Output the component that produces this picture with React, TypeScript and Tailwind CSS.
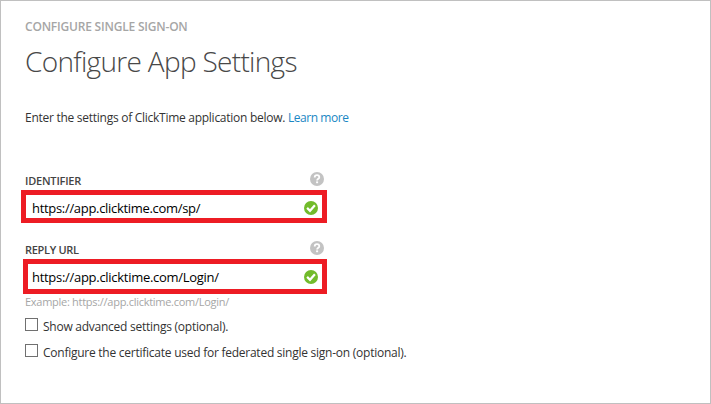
import React from "react";

function HelpIcon() {
  return (
    <svg className="block h-[14px] w-[14px]" viewBox="0 0 14 14">
      <circle cx="7" cy="7" r="7" fill="#c3c3c3" />
      <path d="M4.7 5.4C4.7 4 5.7 3.2 7 3.2s2.3.7 2.3 2c0 1.6-2.2 1.6-2.2 3.4" fill="none" stroke="#fff" strokeWidth="1.8" />
      <rect x="6.1" y="9.4" width="2" height="1.8" fill="#fff" />
    </svg>
  );
}

function CheckIcon({ className }: { className: string }) {
  return (
    <svg className={`block h-[14px] w-[14px] ${className}`} viewBox="0 0 14 14">
      <circle cx="7" cy="7" r="7" fill="#72bb2b" />
      <path d="M3.1 6.9 6 9.8l4.9-5.6" fill="none" stroke="#fff" strokeWidth="2.2" />
    </svg>
  );
}

function Option({ children }: { children: React.ReactNode }) {
  return (
    <label className="flex h-[26px] items-start">
      <span className="h-[13px] w-[13px] shrink-0 border border-[#707070] bg-white" />
      <span className="ml-[5px] mt-[1px] text-[12px] leading-[16px] tracking-[-0.25px] text-[#333]">{children}</span>
    </label>
  );
}

export default function App() {
  return (
    <main className="h-[404px] w-[711px] overflow-hidden whitespace-nowrap border border-[#c0c0c0] bg-white pl-6 font-['Open_Sans','Noto_Sans',sans-serif]">
      <p className="mt-[18px] h-4 text-[12px] font-semibold leading-4 tracking-[-0.2px] text-[#a6a6a6]">
        <span>CONFIGURE SINGLE SIGN-ON</span>
      </p>
      <h1 className="mt-[6px] h-10 text-[28px] font-light leading-10 tracking-[-0.69px] text-[#484848]">
        <span>Configure App Settings</span>
      </h1>
      <p className="mt-[29px] h-4 text-[12px] leading-4 tracking-[-0.27px] text-[#333]">
        <span>Enter the settings of ClickTime application below. </span>
        <a className="tracking-[-0.45px] text-[#1a87c4]">Learn more</a>
      </p>
      <div className="mt-[46px] flex h-[18px] w-[299px] justify-between">
        <span className="mt-[1px] text-[11px] font-semibold leading-4 tracking-[-0.2px] text-[#444]">IDENTIFIER</span>
        <HelpIcon />
      </div>
      <div className="-ml-[4px] flex h-[33px] w-[306px] items-center justify-between border-[5px] border-[#ed1c24] pl-[6px] pr-[4px]">
        <span className="mt-[2px] text-[13px] leading-4 tracking-[-0.31px] text-black">https://app.clicktime.com/sp/</span>
        <CheckIcon className="mt-[3px]" />
      </div>
      <div className="mt-[18px] flex h-[18px] w-[299px] justify-between">
        <span className="mt-[1px] text-[11px] font-semibold leading-4 tracking-[-0.3px] text-[#444]">REPLY URL</span>
        <HelpIcon />
      </div>
      <div className="-ml-[2px] flex h-[35px] w-[304px] items-center justify-between border-[5px] border-[#ed1c24] pl-[4px] pr-[4px]">
        <span className="mt-[1px] text-[13px] leading-4 tracking-[-0.29px] text-black">https://app.clicktime.com/Login/</span>
        <CheckIcon className="mt-[1px]" />
      </div>
      <p className="h-[24px] text-[11px] leading-[15px] tracking-[-0.28px] text-[#a6a6a6]">
        <span>Example: https://app.clicktime.com/Login/</span>
      </p>
      <Option>Show advanced settings (optional).</Option>
      <Option>Configure the certificate used for federated single sign-on (optional).</Option>
    </main>
  );
}
